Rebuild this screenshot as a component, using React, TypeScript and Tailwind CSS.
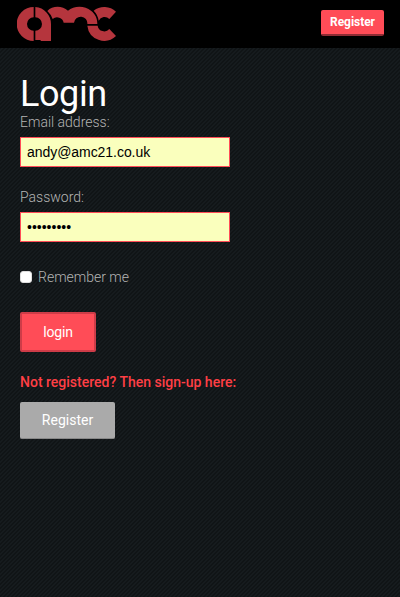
import React from 'react';

function Logo() {
  return (
    <svg width="100" height="36" viewBox="21 18 300 108" fill="#b5353d" aria-label="amc">
      <path d="M71 21A51 51 0 0 0 71 123V92A20 20 0 0 1 71 52Z" />
      <path d="M76 21A51 51 0 0 1 123 72V123H92V120H76V92A20 20 0 0 0 76 52Z" />
      <path d="M112 33C127 17 156 16 174 32C191 17 224 16 243 32C256 42 262 55 262 72H232A20 20 0 0 0 192 68H161A20 20 0 0 0 128 57Q123 43 112 33Z" />
      <path d="M251 32A51 51 0 0 1 318 35L298 57A20 20 0 0 0 266 62Q264 45 251 32Z" />
      <path d="M232 77H263A20 20 0 0 0 298 87L318 108A51 51 0 0 1 232 77Z" />
    </svg>
  );
}

export default function App() {
  return (
    <div className="h-[597px] w-full overflow-hidden bg-[#121618] bg-[repeating-linear-gradient(135deg,#101416_0px,#101416_1.414px,#161b1e_1.414px,#161b1e_2.828px)] font-['Roboto',sans-serif] text-sm text-[#b4b4b4]">
      <header className="flex h-12 items-start justify-between bg-black pl-[17px] pr-4">
        <div className="pt-[6px]"><Logo /></div>
        <button className="mt-[10px] h-[26px] w-[63px] rounded-[2px] border-b-2 border-[#8e2c34] bg-[#ff4c57] text-xs font-bold tracking-[-0.05px] text-white">Register</button>
      </header>
      <main className="flex flex-col items-start pl-5 pt-[26px]">
        <h1 className="h-10 text-[36px] leading-10 tracking-[-0.4px] text-white">Login</h1>
        <label className="h-[23px] font-light leading-4">Email address:</label>
        <input className="h-[30px] w-[210px] border border-[#ff4c57] bg-[#faffbd] px-[6px] font-['Liberation_Sans',sans-serif] text-sm tracking-[-0.05px] text-black outline-none" defaultValue="andy@amc21.co.uk" />
        <label className="mt-[22px] h-[23px] font-light leading-4">Password:</label>
        <input type="password" className="h-[30px] w-[210px] border border-[#ff4c57] bg-[#faffbd] px-[6px] font-['Liberation_Sans',sans-serif] text-sm text-black outline-none" defaultValue="password1" />
        <label className="mt-[27px] flex h-4 items-center gap-[6px] font-light"><input type="checkbox" className="h-3 w-3 appearance-none rounded-[3px] border border-[#dddddd] bg-white" />Remember me</label>
        <button className="mt-[27px] h-10 w-[76px] rounded-[2px] border-2 border-[#ce3c48] bg-[#ff4c57] tracking-[-0.2px] text-white">login</button>
        <p className="mt-[22px] h-4 font-medium leading-4 text-[#ff3f45]">Not registered? Then sign-up here:</p>
        <button className="mt-3 h-[37px] w-[95px] rounded-[2px] border-b border-[#888888] bg-[#aaaaaa] text-white">Register</button>
      </main>
    </div>
  );
}
